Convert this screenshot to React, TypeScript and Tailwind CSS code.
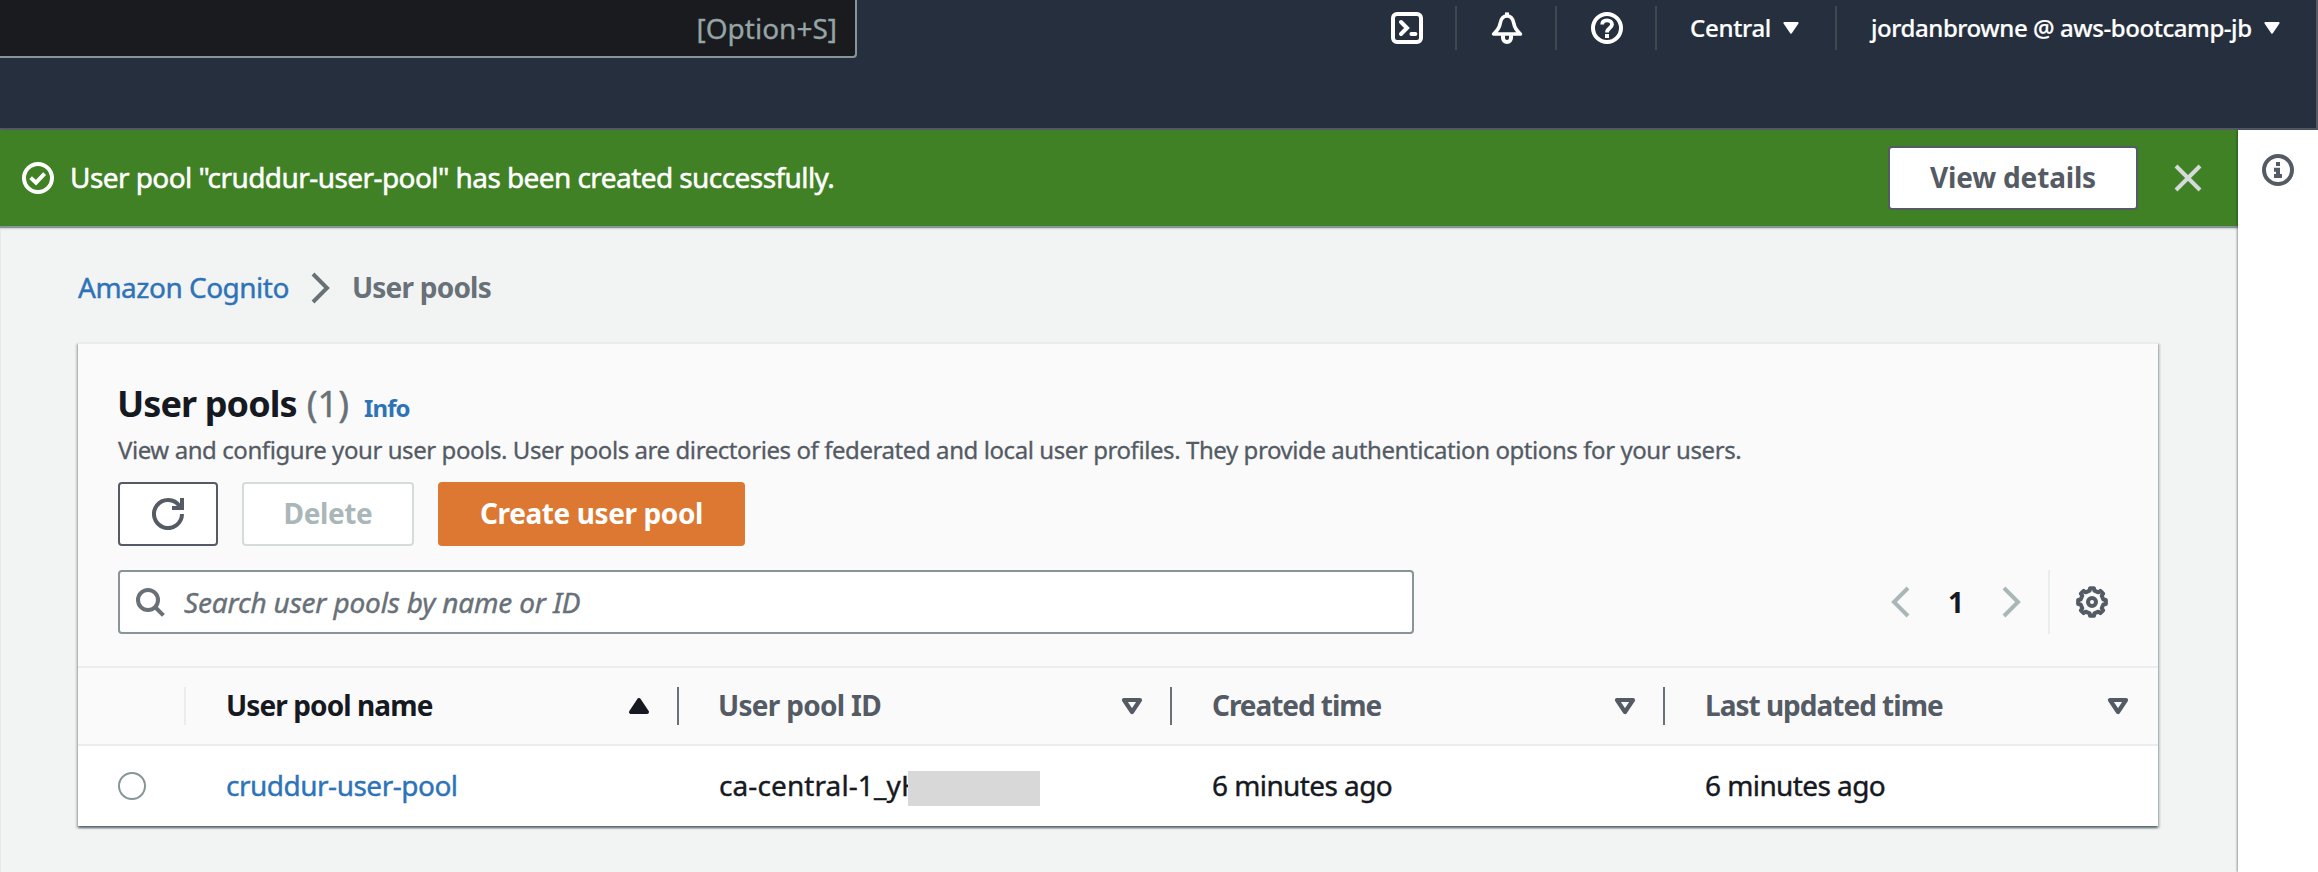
import React from "react";

type IconProps = { className?: string; children: React.ReactNode };

function Icon({ className = "", children }: IconProps) {
  return (
    <svg
      viewBox="0 0 16 16"
      fill="none"
      stroke="currentColor"
      strokeWidth={2}
      className={`size-8 shrink-0 ${className}`}
    >
      {children}
    </svg>
  );
}

function gearPath() {
  const pts: string[] = [];
  const point = (r: number, deg: number) => {
    const a = ((deg - 90) * Math.PI) / 180;
    pts.push(`${(8 + r * Math.cos(a)).toFixed(2)} ${(8 + r * Math.sin(a)).toFixed(2)}`);
  };
  for (let i = 0; i < 8; i++) {
    const c = i * 45;
    point(5.8, c - 12);
    point(7, c - 8);
    point(7, c + 8);
    point(5.8, c + 12);
  }
  return `M${pts.join("L")}Z`;
}

const GEAR = gearPath();

function CaretDown() {
  return (
    <svg viewBox="0 0 16 12" className="h-3 w-4 shrink-0" fill="currentColor" stroke="currentColor" strokeWidth={2} strokeLinejoin="round">
      <path d="M1.4 1h13.2L8 10.8z" />
    </svg>
  );
}

function SortIcon({ up = false }: { up?: boolean }) {
  return (
    <Icon>
      {up ? (
        <path d="M4 11h8L8 5z" fill="currentColor" strokeLinejoin="round" />
      ) : (
        <path d="M4 5h8l-4 6z" strokeWidth={2.1} strokeLinejoin="round" />
      )}
    </Icon>
  );
}

function Header() {
  return (
    <header className="flex h-[130px] items-start justify-between border-r-2 border-b-2 border-[#545b64] bg-[#262f3e]">
      <div className="flex h-[58px] w-[857px] items-center justify-end rounded-br-[4px] border-r-2 border-b-2 border-[#879596] bg-[#1a1b1f] pr-[18px]">
        <span className="text-[28px] leading-[58px] text-[#95a5a6] [-webkit-text-stroke:0.3px]">[Option+S]</span>
      </div>
      <nav className="flex h-11 w-[959px] shrink-0 translate-y-1.5 items-center text-white">
        <div className="flex h-11 w-[100px] items-center justify-center border-r-2 border-[#414750] pl-0.5">
          <Icon>
            <rect x="1" y="1" width="14" height="14" rx="2" />
            <path d="M5 5l3 3-3 3" strokeLinecap="round" strokeLinejoin="miter" />
            <path d="M10.2 11h2" strokeLinecap="round" />
          </Icon>
        </div>
        <div className="flex h-11 w-[100px] items-center justify-center border-r-2 border-[#414750] pl-0.5">
          <Icon>
            <path d="M8 .2v1.600" />
            <path d="M1.300 11C3.600 9 4.200 7.900 4.600 5.700 5 3.300 6.200 2 8 2s3 1.300 3.400 3.700c.4 2.200 1 3.300 3.300 5.300z" strokeWidth={1.800} strokeLinejoin="round" />
            <path d="M6 11.600V13a2 2 0 0 0 4 0v-1.400" />
          </Icon>
        </div>
        <div className="flex h-11 w-[100px] items-center justify-center border-r-2 border-[#414750] pl-0.5">
          <Icon>
            <circle cx="8" cy="8" r="7" />
            <path d="M5.600 6.300C5.600 4.900 6.600 4.200 8 4.200s2.500.8 2.500 2.100C10.500 8 8 8 8 10.200" strokeWidth={1.900} />
            <path d="M8 11v2" />
          </Icon>
        </div>
        <div className="flex h-11 w-[180px] items-center justify-between border-r-2 border-[#414750] pr-9 pl-[33px]">
          <span className="text-[24px] leading-[44px] font-medium tracking-[-0.3px] [-webkit-text-stroke:0.2px]">Central</span>
          <CaretDown />
        </div>
        <div className="flex h-11 grow items-center justify-between pr-9 pl-[34px]">
          <span className="text-[24px] leading-[44px] font-medium tracking-[-0.43px] [-webkit-text-stroke:0.2px]">jordanbrowne @ aws-bootcamp-jb</span>
          <CaretDown />
        </div>
      </nav>
    </header>
  );
}

function Banner() {
  return (
    <div className="relative flex h-24 items-center bg-[#3f8124] pl-[22px] text-white shadow-[0_1px_1px_1px_#879596,0_3px_2px_#d5dbdb]">
      <Icon>
        <circle cx="8" cy="8" r="7" />
        <path d="M4.300 7.800L7 10.300l4.300-4.500" />
      </Icon>
      <span className="-mt-0.5 ml-4 grow text-[28px] leading-9 tracking-[-0.57px] [-webkit-text-stroke:0.5px]">
        User pool "cruddur-user-pool" has been created successfully.
      </span>
      <button className="h-16 w-[250px] rounded-[4px] border-2 border-[#545b64] bg-white pb-0.5 text-[28px] leading-[58px] font-bold tracking-[-0.18px] text-[#545b64]">
        View details
      </button>
      <Icon className="mr-[34px] ml-[34px] text-[#d5dbdb]">
        <path d="M2 2l12 12M14 2L2 14" />
      </Icon>
    </div>
  );
}

function Columns() {
  return (
    <div className="flex h-20 items-center border-y-2 border-[#eaeded] bg-[#fafafa] text-[28px] leading-9 font-bold text-[#545b64]">
      <div className="h-[38px] w-[108px] border-r-2 border-[#eaeded]" />
      <div className="flex h-[38px] w-[493px] items-center justify-between border-r-2 border-[#687078] pr-[22px] pl-10 text-[#16191f]">
        <span className="-mt-0.5 tracking-[-0.9px]">User pool name</span>
        <SortIcon up />
      </div>
      <div className="flex h-[38px] w-[493px] items-center justify-between border-r-2 border-[#687078] pr-[22px] pl-[39px]">
        <span className="-mt-0.5 tracking-[-0.7px]">User pool ID</span>
        <SortIcon />
      </div>
      <div className="flex h-[38px] w-[493px] items-center justify-between border-r-2 border-[#687078] pr-[22px] pl-10">
        <span className="-mt-0.5 tracking-[-1.05px]">Created time</span>
        <SortIcon />
      </div>
      <div className="flex h-[38px] grow items-center justify-between pr-[24px] pl-10">
        <span className="-mt-0.5 tracking-[-1px]">Last updated time</span>
        <SortIcon />
      </div>
    </div>
  );
}

function Row() {
  return (
    <div className="flex h-20 items-center bg-white pb-px text-[28px] leading-9 text-[#16191f] [-webkit-text-stroke:0.4px]">
      <div className="w-[148px] pl-10">
        <div className="size-7 rounded-full border-2 border-[#879596]" />
      </div>
      <div className="-mt-px w-[493px] tracking-[-0.5px] text-[#2e73b8]">cruddur-user-pool</div>
      <div className="flex w-[493px] items-center">
        <span className="-mt-px w-[189px] shrink-0 tracking-[0.1px] whitespace-nowrap">ca-central-1_yH</span>
        <span className="relative mt-[5px] h-[35px] w-[132px] bg-[#d8d8d8]" />
      </div>
      <div className="-mt-px w-[493px] tracking-[-0.58px]">6 minutes ago</div>
      <div className="-mt-px tracking-[-0.58px]">6 minutes ago</div>
    </div>
  );
}

function PoolsCard() {
  return (
    <section className="ml-[78px] h-[484px] w-[2080px] border-t-2 border-[#eaeded] bg-[#fafafa] shadow-[0_2px_2px_rgba(0,28,36,0.5),2px_2px_2px_rgba(0,28,36,0.15),-2px_2px_2px_rgba(0,28,36,0.15)]">
      <div className="h-[322px] px-10 pt-[38px]">
        <div className="flex h-11 items-baseline">
          <h1 className="-ml-px text-[36px] leading-[44px] font-bold tracking-[-0.9px] text-[#16191f]">User pools</h1>
          <span className="ml-2.5 text-[36px] leading-[44px] text-[#687078] [-webkit-text-stroke:0.4px]">(1)</span>
          <span className="ml-[15px] text-[24px] leading-[44px] font-bold tracking-[-0.9px] text-[#2e73b8]">Info</span>
        </div>
        <p className="mt-[7px] h-[35px] text-[24px] leading-[34px] tracking-[-0.425px] whitespace-nowrap text-[#545b64] [-webkit-text-stroke:0.3px]">
          View and configure your user pools. User pools are directories of federated and local user profiles. They provide
          authentication options for your users.
        </p>
        <div className="mt-3.5 flex gap-6">
          <button className="flex h-16 w-[100px] items-center justify-center rounded-[4px] border-2 border-[#545b64] bg-white text-[#545b64]">
            <Icon>
              <path d="M10 5h5V0" />
              <path d="M15 8a7 7 0 1 1-1.200-3.900" />
            </Icon>
          </button>
          <button className="h-16 w-[172px] rounded-[4px] border-2 border-[#d5dbdb] bg-white pb-0.5 text-[28px] leading-[58px] font-bold tracking-[-0.38px] text-[#aab7b8]">
            Delete
          </button>
          <button className="h-16 w-[307px] rounded-[4px] bg-[#dd7832] pb-0.5 text-[28px] leading-[62px] font-bold tracking-[-0.4px] text-white">
            Create user pool
          </button>
        </div>
        <div className="mt-6 flex items-center">
          <div className="flex h-16 w-[1296px] items-center rounded-[4px] border-2 border-[#879596] bg-white pl-4 text-[#687078]">
            <Icon className="mt-1">
              <circle cx="6" cy="6" r="5" />
              <path d="M9.500 9.500l4.200 4.200" />
            </Icon>
            <span className="-mt-px ml-4 text-[28px] leading-9 tracking-[-0.17px] italic [-webkit-text-stroke:0.4px]">Search user pools by name or ID</span>
          </div>
          <div className="ml-[472px] flex h-16 items-center">
            <Icon className="text-[#aab7b8]">
              <path d="M11 1L4 8l7 7" />
            </Icon>
            <span className="-mt-px w-[76px] text-center text-[28px] leading-9 font-bold text-[#16191f]">1</span>
            <Icon className="text-[#aab7b8]">
              <path d="M5 1l7 7-7 7" />
            </Icon>
          </div>
          <div className="ml-[22px] flex h-16 items-center border-l-2 border-[#eaeded] pl-[26px] text-[#545b64]">
            <Icon>
              <path d={GEAR} strokeLinejoin="round" />
              <circle cx="8" cy="8" r="2" />
            </Icon>
          </div>
        </div>
      </div>
      <Columns />
      <Row />
    </section>
  );
}

export default function App() {
  return (
    <div className="flex h-[872px] w-[2318px] flex-col overflow-hidden bg-white font-['Noto_Sans',sans-serif]">
      <Header />
      <div className="flex grow">
        <main className="w-[2238px] border-l border-[#e6e9e9] bg-[#f2f3f3] shadow-[1px_0_2px_rgba(0,28,36,0.5)]">
          <div className="-ml-px">
            <Banner />
            <div className="flex h-[116px] items-center pt-2 pl-[78px] text-[28px] leading-9">
              <span className="-mt-0.5 tracking-[-0.5px] text-[#2e73b8] [-webkit-text-stroke:0.4px]">Amazon Cognito</span>
              <Icon className="mr-[17px] ml-[14px] text-[#687078]">
                <path d="M5 1l7 7-7 7" />
              </Icon>
              <span className="-mt-0.5 font-bold tracking-[-0.78px] text-[#687078]">User pools</span>
            </div>
            <PoolsCard />
          </div>
        </main>
        <aside className="relative w-20 bg-white pt-6 pl-6 text-[#545b64] shadow-[-1px_0_2px_rgba(0,28,36,0.4)]">
          <Icon>
            <circle cx="8" cy="8" r="7" />
            <path d="M8 4v2M6 7.900h2V11M6 11h4" />
          </Icon>
        </aside>
      </div>
    </div>
  );
}
